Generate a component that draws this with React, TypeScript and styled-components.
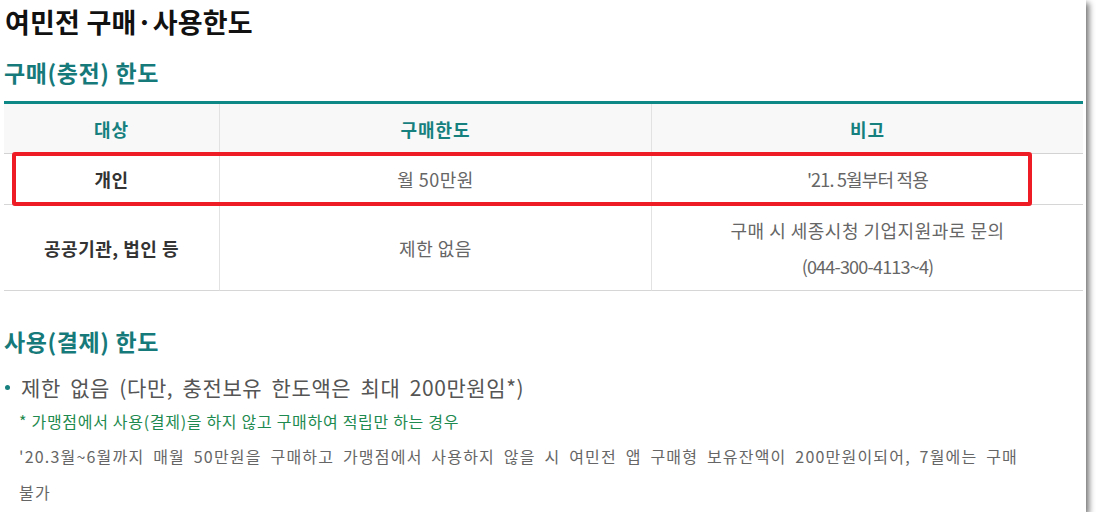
import React from "react";
import styled, { createGlobalStyle } from "styled-components";

const Global = createGlobalStyle`
  html, body { margin: 0; padding: 0; background: #ffffff; }
  body { font-family: "Noto Sans CJK KR", "Noto Sans", sans-serif; }
  * { box-sizing: border-box; }
`;

const Panel = styled.div`
  width: 1086px;
  height: 512px;
  background: #ffffff;
  padding: 4px 3px 0 4px;
  box-shadow: 3px 3px 6px rgba(0, 0, 0, 0.55);
  overflow: hidden;
`;

const Title = styled.h1`
  margin: 0;
  padding-left: 1px;
  font-size: 27px;
  line-height: 36px;
  font-weight: 700;
  color: #111111;
  letter-spacing: 0.2px;
`;

const SectionTitle = styled.h2<{ $top: number }>`
  margin: ${(p) => p.$top}px 0 0 0;
  font-size: 23px;
  line-height: 32px;
  font-weight: 700;
  color: #16797a;
  letter-spacing: 0.6px;
`;

const TableWrap = styled.div`
  position: relative;
  margin-top: 13px;
`;

const Table = styled.div`
  display: grid;
  grid-template-columns: 215px 432px 432px;
  border-top: 3px solid #0e8787;
`;

const HeadCell = styled.div<{ $first?: boolean }>`
  height: 50px;
  display: flex;
  align-items: center;
  justify-content: center;
  background: #f8f8f8;
  border-bottom: 1px solid #d3d3d3;
  border-left: ${(p) => (p.$first ? "none" : "1px solid #e2e2e2")};
  font-size: 18px;
  font-weight: 700;
  color: #16807f;
  letter-spacing: 1px;
`;

const Cell = styled.div<{ $first?: boolean; $bold?: boolean; $h: number }>`
  height: ${(p) => p.$h}px;
  display: flex;
  flex-direction: column;
  align-items: center;
  justify-content: center;
  border-bottom: 1px solid #d6d6d6;
  border-left: ${(p) => (p.$first ? "none" : "1px solid #e2e2e2")};
  font-size: 18px;
  line-height: 36px;
  font-weight: ${(p) => (p.$bold ? 700 : 400)};
  color: ${(p) => (p.$bold ? "#333333" : "#666666")};
  letter-spacing: 0.5px;
  text-align: center;
`;

const CellLine = styled.span<{ $tight?: boolean }>`
  letter-spacing: ${(p) => (p.$tight ? "-0.8px" : "inherit")};
`;

const Highlight = styled.div`
  position: absolute;
  left: 8px;
  top: 51px;
  width: 1020px;
  height: 54px;
  border: 4px solid #ee1c25;
  border-radius: 3px;
  pointer-events: none;
`;

const BulletLine = styled.div`
  margin-top: 15px;
  display: flex;
  align-items: center;
  font-size: 21px;
  line-height: 30px;
  color: #555555;
  letter-spacing: 0.6px;
  word-spacing: 4px;
`;

const Dot = styled.span`
  width: 5px;
  height: 5px;
  border-radius: 50%;
  background: #17807f;
  margin: 0 11px 0 1px;
  flex: none;
`;

const Note = styled.p`
  margin: 2px 0 0 0;
  padding-left: 15px;
  font-size: 16px;
  line-height: 34px;
  color: #1e8a4f;
  letter-spacing: 0.7px;
`;

const Para = styled.p`
  margin: 0;
  padding: 0 55px 0 15px;
  font-size: 16px;
  line-height: 36px;
  color: #666666;
  letter-spacing: 1.2px;
  word-spacing: 4px;
`;

const rows = [
  {
    who: "개인",
    limit: "월 50만원",
    note: [{ t: "'21. 5월부터 적용", tight: true }],
    h: 51,
  },
  {
    who: "공공기관, 법인 등",
    limit: "제한 없음",
    note: [
      { t: "구매 시 세종시청 기업지원과로 문의", tight: false },
      { t: "(044-300-4113~4)", tight: true },
    ],
    h: 86,
  },
];

export default function App() {
  return (
    <>
      <Global />
      <Panel>
        <Title>여민전 구매·사용한도</Title>
        <SectionTitle $top={16}>구매(충전) 한도</SectionTitle>
        <TableWrap>
          <Table>
            <HeadCell $first>대상</HeadCell>
            <HeadCell>구매한도</HeadCell>
            <HeadCell>비고</HeadCell>
            {rows.map((r) => (
              <React.Fragment key={r.who}>
                <Cell $first $bold $h={r.h}>
                  {r.who}
                </Cell>
                <Cell $h={r.h}>{r.limit}</Cell>
                <Cell $h={r.h}>
                  {r.note.map((n) => (
                    <CellLine key={n.t} $tight={n.tight}>
                      {n.t}
                    </CellLine>
                  ))}
                </Cell>
              </React.Fragment>
            ))}
          </Table>
          <Highlight />
        </TableWrap>
        <SectionTitle $top={34}>사용(결제) 한도</SectionTitle>
        <BulletLine>
          <Dot />
          제한 없음 (다만, 충전보유 한도액은 최대 200만원임*)
        </BulletLine>
        <Note>* 가맹점에서 사용(결제)을 하지 않고 구매하여 적립만 하는 경우</Note>
        <Para>
          '20.3월~6월까지 매월 50만원을 구매하고 가맹점에서 사용하지 않을 시 여민전 앱 구매형
          보유잔액이 200만원이되어, 7월에는 구매 불가
        </Para>
      </Panel>
    </>
  );
}
